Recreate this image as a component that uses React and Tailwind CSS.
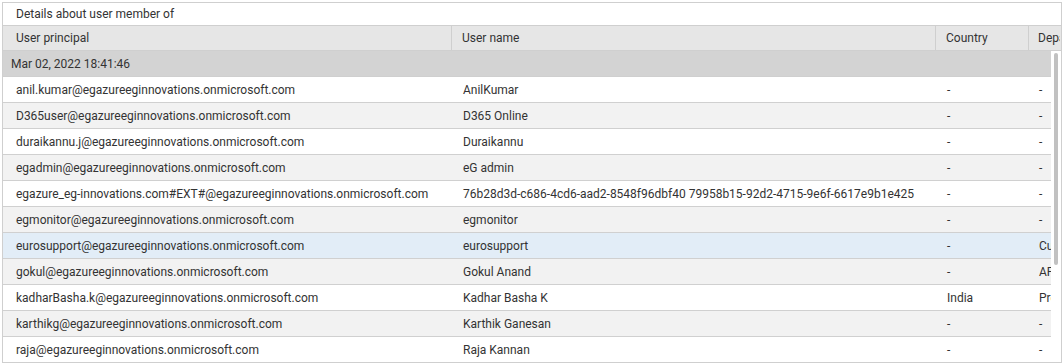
import React from 'react'

const rows = [
    { principal: 'anil.kumar@egazureeginnovations.onmicrosoft.com', name: 'AnilKumar', country: '-', dep: '-' },
    { principal: 'D365user@egazureeginnovations.onmicrosoft.com', name: 'D365 Online', country: '-', dep: '-' },
    { principal: 'duraikannu.j@egazureeginnovations.onmicrosoft.com', name: 'Duraikannu', country: '-', dep: '-' },
    { principal: 'egadmin@egazureeginnovations.onmicrosoft.com', name: 'eG admin', country: '-', dep: '-' },
    { principal: 'egazure_eg-innovations.com#EXT#@egazureeginnovations.onmicrosoft.com', name: '76b28d3d-c686-4cd6-aad2-8548f96dbf40 79958b15-92d2-4715-9e6f-6617e9b1e425', country: '-', dep: '-' },
    { principal: 'egmonitor@egazureeginnovations.onmicrosoft.com', name: 'egmonitor', country: '-', dep: '-' },
    { principal: 'eurosupport@egazureeginnovations.onmicrosoft.com', name: 'eurosupport', country: '-', dep: 'Customer Support', selected: true },
    { principal: 'gokul@egazureeginnovations.onmicrosoft.com', name: 'Gokul Anand', country: '-', dep: 'APAC' },
    { principal: 'kadharBasha.k@egazureeginnovations.onmicrosoft.com', name: 'Kadhar Basha K', country: 'India', dep: 'Presales' },
    { principal: 'karthikg@egazureeginnovations.onmicrosoft.com', name: 'Karthik Ganesan', country: '-', dep: '-' },
    { principal: 'raja@egazureeginnovations.onmicrosoft.com', name: 'Raja Kannan', country: '-', dep: '-' },
]

const App = () => {
    return (
        <div className="bg-white w-[1063px] h-[363px] pt-[2px] pl-[2px] overflow-hidden" style={{ fontFamily: 'Roboto, "Liberation Sans", sans-serif' }}>
            <div className="w-[1060px] h-[361px] border border-[#cfcfcf] text-[12px] text-[#333] flex flex-col overflow-hidden">
                {/* Title */}
                <div className="h-[23px] shrink-0 border-b border-[#cfcfcf] flex items-center pl-[13px]">
                    Details about user member of
                </div>

                {/* Header */}
                <div className="h-[25px] shrink-0 bg-[#e6e6e6] border-b border-[#cfcfcf] flex whitespace-nowrap overflow-hidden">
                    <div className="w-[449px] shrink-0 border-r border-[#cfcfcf] flex items-center pl-[13px]">User principal</div>
                    <div className="w-[484px] shrink-0 border-r border-[#cfcfcf] flex items-center pl-[10px]">User name</div>
                    <div className="w-[93px] shrink-0 border-r border-[#cfcfcf] flex items-center pl-[10px]">Country</div>
                    <div className="w-[31px] shrink-0 flex items-center pl-[9px] overflow-hidden">Department</div>
                </div>

                {/* Body */}
                <div className="flex flex-1 min-h-0">
                    <div className="w-[1048px] shrink-0 overflow-hidden">
                        <div className="h-[26px] bg-[#d3d3d3] border-b border-[#cfcfcf] flex items-center pl-[8px]">
                            Mar 02, 2022 18:41:46
                        </div>
                        {rows.map((r, i) => (
                            <div
                                key={r.principal}
                                className={`h-[26px] border-b border-[#d0d0d0] flex whitespace-nowrap ${r.selected ? 'bg-[#e2edf7]' : i % 2 === 0 ? 'bg-white' : 'bg-[#f2f2f2]'}`}
                            >
                                <div className="w-[449px] shrink-0 flex items-center pl-[13px]">{r.principal}</div>
                                <div className="w-[484px] shrink-0 flex items-center pl-[11px]">{r.name}</div>
                                <div className="w-[93px] shrink-0 flex items-center pl-[11px]">{r.country}</div>
                                <div className="w-[22px] shrink-0 flex items-center pl-[10px] overflow-hidden">{r.dep}</div>
                            </div>
                        ))}
                    </div>
                    {/* Scrollbar */}
                    <div className="flex-1 bg-white pt-[2px] pl-[3px]">
                        <div className="w-[4px] h-[212px] rounded-full bg-[#c1c1c1]" />
                    </div>
                </div>
            </div>
        </div>
    )
}

export default App
